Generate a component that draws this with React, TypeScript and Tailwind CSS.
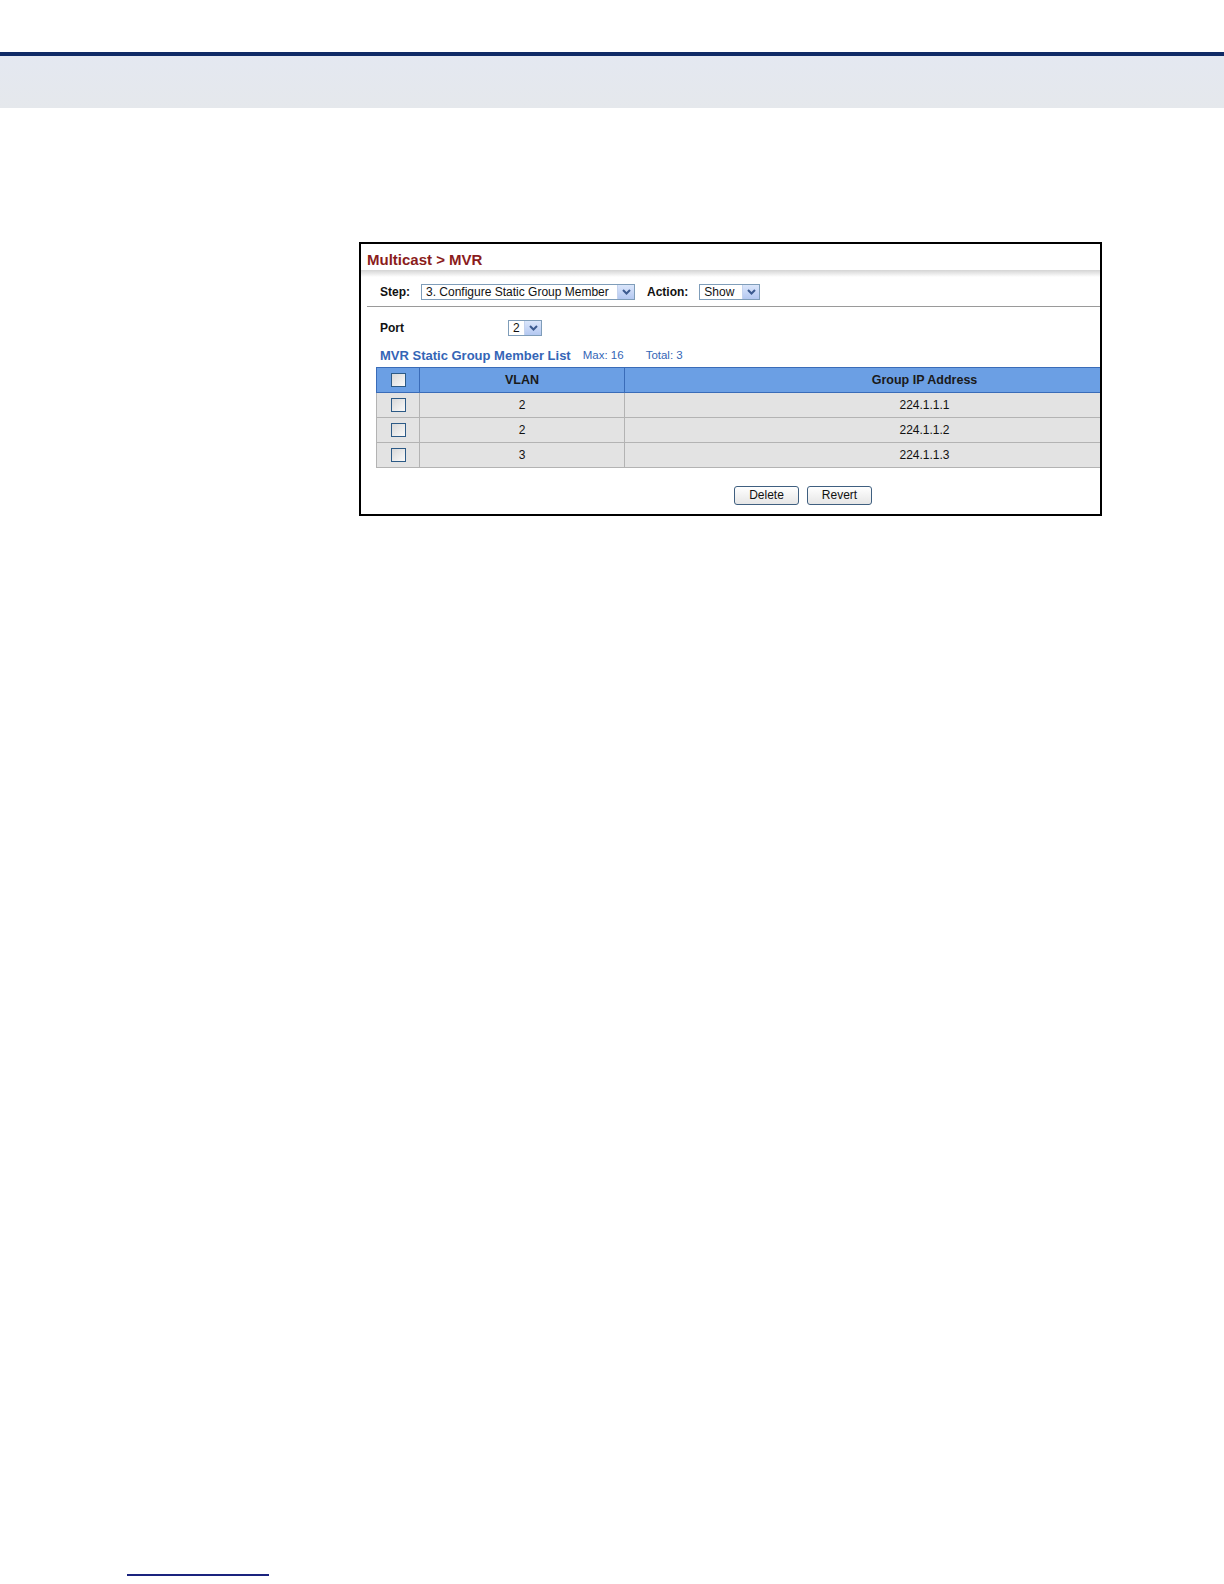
import React from 'react'

const font = { fontFamily: '"Liberation Sans", Arial, sans-serif' }

function Chevron() {
  return (
    <span className="flex h-full w-[17px] items-center justify-center border-l border-[#c5d3ee] bg-gradient-to-b from-[#dbe6fb] to-[#b4c8f1]">
      <svg width="9" height="6" viewBox="0 0 9 6">
        <polyline points="1,1 4.5,4.5 8,1" fill="none" stroke="#3c5a8f" strokeWidth="2" />
      </svg>
    </span>
  )
}

function Select({ value, width }: { value: string; width: string }) {
  return (
    <div className={`flex h-[16px] items-center border border-[#7f9db9] bg-white ${width}`}>
      <span className="flex-1 truncate pl-[4px] text-[12px] leading-[14px] text-[#111]">{value}</span>
      <Chevron />
    </div>
  )
}

function Checkbox() {
  return (
    <span className="block h-[14px] w-[15px] border border-[#2c5a86] bg-gradient-to-br from-[#d8d8d8] to-[#fafafa]" />
  )
}

const rows = [
  { vlan: '2', ip: '224.1.1.1' },
  { vlan: '2', ip: '224.1.1.2' },
  { vlan: '3', ip: '224.1.1.3' },
]

export default function App() {
  return (
    <div className="flex h-[1584px] w-[1224px] flex-col bg-white" style={font}>
      {/* page header band */}
      <div className="mt-[52px] h-[4px] bg-[#0f2a66]" />
      <div className="h-[52px] bg-gradient-to-b from-[#e4e8f1] to-[#e5e8ec]" />

      {/* screenshot frame */}
      <div className="ml-[359px] mt-[134px] w-[743px] overflow-hidden border-2 border-black bg-white">
        <div className="h-[26px] pl-[6px] pt-[8px] text-[15px] font-bold leading-[16px] text-[#8a1c1c]">
          Multicast &gt; MVR
        </div>
        <div className="h-[7px] bg-gradient-to-b from-[#d4d4d4] to-white" />

        <div className="mt-[7px] flex h-[16px] items-center pl-[19px] text-[12px] text-[#111]">
          <span className="font-bold">Step:</span>
          <div className="ml-[11px]">
            <Select value="3. Configure Static Group Member" width="w-[214px]" />
          </div>
          <span className="ml-[12px] font-bold">Action:</span>
          <div className="ml-[11px]">
            <Select value="Show" width="w-[61px]" />
          </div>
        </div>
        <div className="ml-[6px] mt-[6px] h-px bg-[#9a9a9a]" />

        <div className="mt-[13px] flex h-[16px] items-center pl-[19px] text-[12px] text-[#111]">
          <span className="w-[128px] font-bold">Port</span>
          <Select value="2" width="w-[34px]" />
        </div>

        <div className="mt-[12px] flex h-[16px] items-center pl-[19px] text-[#3465b6]">
          <span className="text-[13px] font-bold">MVR Static Group Member List</span>
          <span className="ml-[12px] text-[11.5px]">Max: 16</span>
          <span className="ml-[22px] text-[11.5px]">Total: 3</span>
        </div>

        {/* table runs past the right edge of the captured window */}
        <table className="ml-[15px] mt-[3px] w-[848px] min-w-[848px] table-fixed border-collapse text-[12px] text-[#111]">
          <thead>
            <tr className="h-[25px] bg-[#6b9fe4]">
              <th className="w-[43px] border border-[#3a6cb8] p-0">
                <div className="flex justify-center"><Checkbox /></div>
              </th>
              <th className="w-[205px] border border-[#3a6cb8] p-0 text-[12.5px] font-bold text-[#1a1a1a]">VLAN</th>
              <th className="w-[600px] border border-[#3a6cb8] p-0 text-[12.5px] font-bold text-[#1a1a1a]">Group IP Address</th>
            </tr>
          </thead>
          <tbody>
            {rows.map((r, i) => (
              <tr key={i} className="h-[25px] bg-[#e3e3e3]">
                <td className="border border-[#b3b3b3] p-0">
                  <div className="flex justify-center"><Checkbox /></div>
                </td>
                <td className="border border-[#b3b3b3] p-0 text-center">{r.vlan}</td>
                <td className="border border-[#b3b3b3] p-0 text-center">{r.ip}</td>
              </tr>
            ))}
          </tbody>
        </table>

        <div className="mb-[9px] mt-[18px] flex gap-[8px] pl-[373px]">
          <button className="h-[19px] w-[65px] rounded-[3px] border border-[#3f5f80] bg-gradient-to-b from-white to-[#e6e6e6] text-[12px] leading-[17px] text-[#111]">
            Delete
          </button>
          <button className="h-[19px] w-[65px] rounded-[3px] border border-[#3f5f80] bg-gradient-to-b from-white to-[#e6e6e6] text-[12px] leading-[17px] text-[#111]">
            Revert
          </button>
        </div>
      </div>

      {/* footer rule */}
      <div className="mb-[8px] ml-[127px] mt-auto h-[2px] w-[142px] bg-[#1a237e]" />
    </div>
  )
}
